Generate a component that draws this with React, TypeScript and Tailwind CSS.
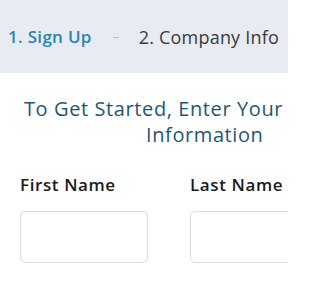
export default function App() {
  return (
    <div className="w-[288px] h-[288px] overflow-hidden bg-white font-['Open_Sans',sans-serif]">
      <div className="h-[73px] bg-[#e8ecf2] flex items-center pl-[8px] pt-[1px] whitespace-nowrap">
        <span className="text-[17px] tracking-[0.3px] font-semibold text-[#2b86ad]">1. Sign Up</span>
        <span className="ml-[21px] w-[6px] h-px bg-[#b9bec6]"></span>
        <span className="ml-[20px] text-[18px] tracking-[0.2px] text-[#3a3a3a]">2. Company Info</span>
      </div>

      <div className="pt-[23px] text-[20px] leading-[26px] tracking-[0.6px] text-[#1e5870] whitespace-nowrap">
        <div className="pl-[24px]">To Get Started, Enter Your</div>
        <div className="pl-[146px]">Information</div>
      </div>

      <div className="flex gap-[42px] pl-[20px] pt-[26px] whitespace-nowrap">
        <div className="w-[128px] shrink-0">
          <label className="block text-[17px] leading-[22px] tracking-[0.6px] font-semibold text-[#1a1a1a]">First Name</label>
          <input type="text" className="mt-[15px] block w-[128px] h-[52px] border border-[#dcdcdc] rounded-[5px] outline-none" />
        </div>
        <div className="w-[128px] shrink-0">
          <label className="block text-[17px] leading-[22px] tracking-[0.6px] font-semibold text-[#1a1a1a]">Last Name</label>
          <input type="text" className="mt-[15px] block w-[128px] h-[52px] border border-[#dcdcdc] rounded-[5px] outline-none" />
        </div>
      </div>
    </div>
  );
}
